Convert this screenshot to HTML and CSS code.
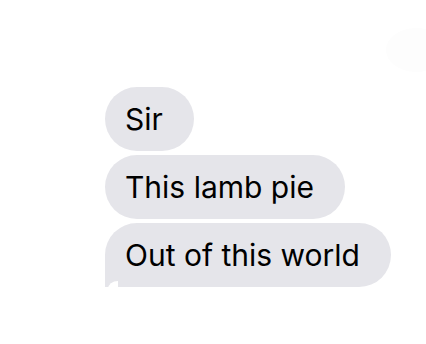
FILE: index.html
```html
<!DOCTYPE html>
<html>
<head>
<meta charset="utf-8">
<link rel="stylesheet" href="styles.css">
</head>
<body>
<div class="blob"></div>
<div class="thread">
  <div class="bubble">Sir</div>
  <div class="bubble">This lamb pie</div>
  <div class="bubble last">Out of this world</div>
</div>
</body>
</html>
```
FILE: styles.css
```css
html, body {
  margin: 0;
  padding: 0;
  background: #ffffff;
  width: 426px;
  height: 344px;
  overflow: hidden;
  position: relative;
}
.blob {
  position: absolute;
  left: 386px;
  top: 28px;
  width: 60px;
  height: 44px;
  border-radius: 50%;
  background: #fdfdfd;
}
.thread {
  display: flex;
  flex-direction: column;
  align-items: flex-start;
  gap: 4px;
  padding: 87px 0 0 105px;
  font-family: Inter, "Liberation Sans", sans-serif;
  font-size: 30px;
  color: #000;
}
.bubble {
  position: relative;
  background: #e5e5ea;
  height: 64px;
  line-height: 64px;
  padding: 0 31px 0 20px;
  border-radius: 32px;
  box-sizing: border-box;
}
.bubble.last {
  border-bottom-left-radius: 0;
}
.bubble.last::before {
  content: "";
  position: absolute;
  left: 0;
  bottom: 0;
  width: 14px;
  height: 10px;
  background: #e5e5ea;
}
.bubble.last::after {
  content: "";
  position: absolute;
  left: 3px;
  bottom: -2px;
  width: 10px;
  height: 8px;
  background: #ffffff;
  border-top-left-radius: 10px 8px;
}
```
